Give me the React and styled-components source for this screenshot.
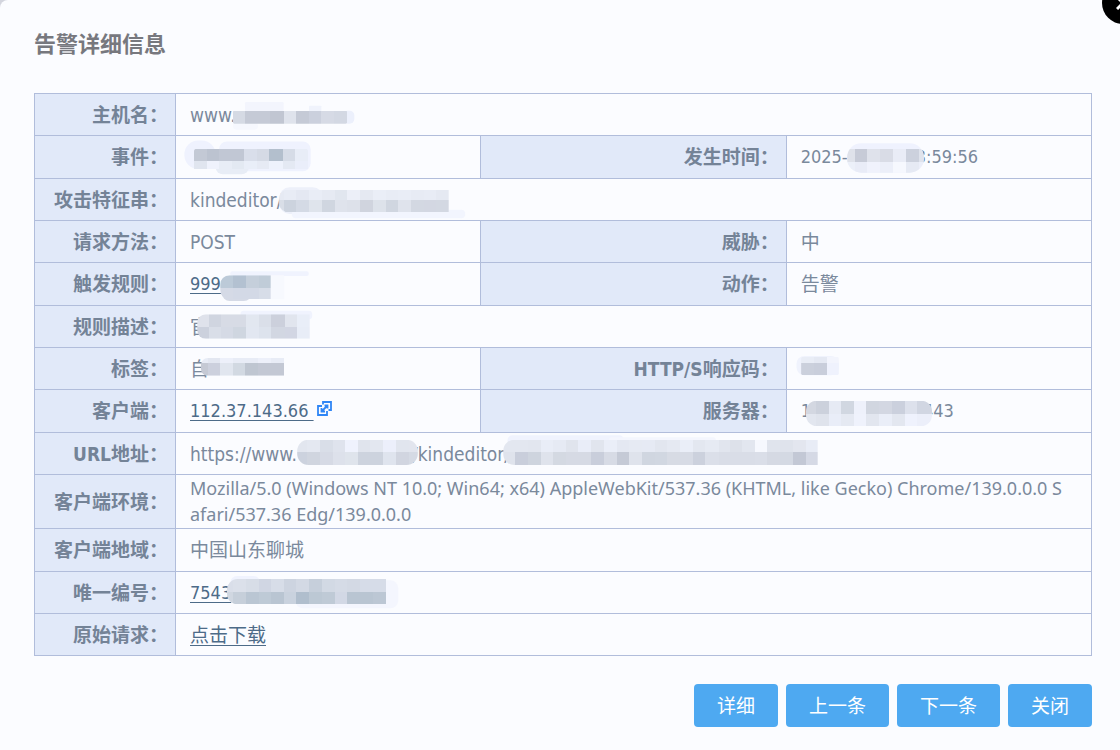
import React, { useId } from 'react';
import styled, { createGlobalStyle } from 'styled-components';

const GlobalStyle = createGlobalStyle`
  * {
    box-sizing: border-box;
  }

  body {
    margin: 0;
    background: #d3d5de;
    color: #7a899c;
    font-family: Tahoma, 'DejaVu Sans Condensed', 'Noto Sans CJK SC', sans-serif;
    font-size: 19px;
    line-height: 26px;
  }
`;

const Dialog = styled.main`
  position: relative;
  min-height: 100vh;
  padding: 32px 28px 22px 34px;
  overflow: hidden;
  background: #fbfcff;
  border-top-left-radius: 8px;
`;

const Title = styled.h1`
  margin: 0 0 35px;
  color: #77787e;
  font-size: 22px;
  line-height: 26px;
`;

const CloseButton = styled.button`
  position: absolute;
  top: -18px;
  right: -24px;
  width: 42px;
  height: 42px;
  padding: 0;
  border: 0;
  border-radius: 50%;
  background: #000;
  cursor: pointer;

  svg {
    display: block;
    margin: auto;
  }
`;

const DetailTable = styled.table`
  width: 100%;
  table-layout: fixed;
  border-collapse: collapse;
`;

const LabelCol = styled.col`
  width: 141px;
`;

const Row = styled.tr`
  height: 42px;

  &:nth-child(3n + 2) {
    height: 43px;
  }
`;

const Label = styled.th`
  padding: 0 7px 0 0;
  border: 1px solid #b1bddb;
  background: #e1e9f9;
  color: #748397;
  font-weight: bold;
  text-align: right;
  white-space: nowrap;
`;

const Value = styled.td`
  padding: 0 14px;
  border: 1px solid #b1bddb;
`;

const Line = styled.div`
  display: flex;
  align-items: center;
  font-size: ${props => (props.$numeric ? 18 : 19)}px;
  white-space: pre;
`;

const LongText = styled.div`
  padding: 0 8px 1px 0;
  font-family: 'Noto Sans', sans-serif;
  font-size: 18px;
  word-break: break-all;
`;

const Link = styled.a`
  color: #4d6b88;
  text-decoration: underline;
  text-decoration-thickness: 1px;
  text-underline-offset: 3px;
`;

const IconLink = styled.a`
  display: flex;
  margin: 0 0 6px 3px;
`;

const MosaicSvg = styled.svg`
  position: relative;
  flex: none;
  overflow: visible;
  margin-left: -${props => props.$before || 0}px;
  margin-right: -${props => props.$after || 0}px;
`;

const Actions = styled.footer`
  display: flex;
  justify-content: flex-end;
  gap: 8px;
  margin-top: 28px;
`;

const ActionButton = styled.button`
  height: 43px;
  padding: 0 23px;
  border: 0;
  border-radius: 4px;
  background: #4ea9f1;
  color: #fff;
  font: inherit;
  cursor: pointer;
`;

// Masks are drawn on a grid of three units per pixel, measured from the row's top line.
const masks = {
  host: {
    xs: [0, 36, 75, 112, 152, 188, 228, 265, 304, 342],
    halo: [[36, 24, 116, 28, 4, '#f3f5fd'], [0, 86, 75, 21, 10, '#f6f8fe'], [228, 35, 37, 20, 2, '#f0f3fc'], [330, 50, 34, 39, 14, '#ecf0fc']],
    clip: [0, 50, 342, 39, 4],
    bands: [[50, 39, 'd5dae4 c5cad6 c5cad6 c1c6d2 dfe3ec c5cad6 cbd0dd d6dae5 d3d8e3']],
  },
  event: {
    xs: [0, 39, 75, 114, 151, 190, 227, 267, 303, 343],
    halo: [[-29, 13, 94, 86, 42, '#eff2fe'], [75, 16, 276, 90, 24, '#eff2fe'], [65, 70, 100, 45, 22, '#e8edf6']],
    clip: [0, 38, 343, 70, 8],
    bands: [[38, 37, 'c3c9d5 bcc3d0 c1c7d4 c1c7d4 d9deea d5dae5 b3bfcd d6dce7 e8edf7'], [75, 25, 'e0e5ef eff2fc e8edf6 e3e9f2 e9eef8 e6eaf4 eef2fc e4e9f3 eaeefa']],
  },
  time: {
    xs: [198, 222, 258, 297, 334, 375, 413, 428],
    halo: [[198, 22, 230, 88, 42, '#eff2fe']],
    clip: [198, 22, 230, 88, 42],
    bands: [[39, 38, 'dfe2ea c7cbd7 dfe2eb d9dce6 e9ecf6 ccd1dd dfe3ec'], [77, 33, 'ecf0f9 e9ecf7 f0f2fc eceff9 f6f8fe e6eaf4 eceffa']],
  },
  feature: {
    xs: [297, 312, 348, 387, 426, 465, 501, 540, 577, 616, 654, 693, 730, 768, 806],
    halo: [[298, 25, 130, 80, 30, '#edf0fa'], [335, 92, 520, 26, 12, '#f2f5fe']],
    clip: [297, 30, 509, 70, 28],
    square: true,
    bands: [[32, 30, 'e6eaf3 e8ecf5 e4e8f2 e9edf6 e6eaf3 e1e6ef eceff8 e5e9f2 eaeef7 e8ecf5 e9edf6 e7ebf4 e8ecf5 e5e9f2'], [62, 38, 'd9dee7 ccd3de d4dae5 dfe4ec d0d6e0 dfe3ec dde1ea d0d4de dde2ea d0d6e0 dfe3ec d3d8e2 d3d7e2 d3d8e2']],
  },
  rule: {
    xs: [120, 158, 196, 235, 272],
    halo: [[150, 25, 236, 14, 7, '#f0f3fe'], [260, 37, 52, 72, 2, '#f7f9fe'], [125, 60, 90, 54, 24, '#d5dae6']],
    clip: [120, 37, 152, 72, 28],
    square: true,
    bands: [[37, 38, 'bccad8 b3c1d1 c5cfdb c0ccd8'], [75, 34, 'd5dae6 d3d9e6 d3d9e6 d7dde8']],
  },
  description: {
    xs: [50, 84, 120, 158, 196, 235, 272, 312, 348, 388],
    halo: [[180, 14, 215, 26, 10, '#f0f3fe']],
    clip: [50, 25, 338, 73, 26],
    square: true,
    bands: [[25, 39, 'dfe2eb d0d5e0 d7dbe5 d7dbe5 e2e7f0 dadfe9 ccd0dc e1e5ee e9eef8'], [64, 34, 'ccd1dd d9dee8 d5dae5 cfd6e0 e2e7f1 dde3ed d2d7e2 d2d6e3 e8edf7']],
  },
  tag: {
    xs: [62, 84, 120, 158, 196, 235, 272, 312],
    halo: [[75, 30, 237, 30, 14, '#eff2fb']],
    clip: [62, 30, 250, 53, 20],
    square: true,
    bands: [[30, 16, 'e8ecf6 e3e7f1 edf0fa e8ecf6 e8ecf6 edf0fa e8ecf6'], [46, 37, 'c5c9d4 ccd0dd e1e6ef d2d9e2 bfc6d1 c3c8d4 c3c8d4']],
  },
  status: {
    xs: [549, 587, 626, 662],
    halo: [[535, 24, 127, 58, 24, '#f0f3fd']],
    clip: [549, 26, 113, 56, 6],
    bands: [[28, 18, 'e9edf6 e5e9f3 f3f5fd'], [46, 36, 'cbd0dc c9cedb eff2fd']],
  },
  server: {
    xs: [558, 587, 626, 662, 702, 738, 778, 815, 855, 890, 936],
    halo: [],
    clip: [558, 32, 378, 76, 32],
    bands: [[32, 39, 'd3d7e1 ccd1dc e6eaf4 d1d7e1 eef1fb d1d6e0 d3d7e2 cbd0dd dde1ec d1d6e2'], [71, 37, 'e2e6ef dfe3ec e9edf8 e5e9f2 eff2fc e2e6ef eaeef8 e3e7f0 eff2fd eceffa']],
  },
  domain: {
    xs: [358, 387, 426, 465, 501, 540, 577, 616, 654, 693, 720],
    halo: [],
    clip: [358, 20, 362, 76, 34],
    bands: [[20, 38, 'e2e6ef e4e8f1 d9dee8 dfe3ed eff2fd e0e4ed e3e7f0 eceffb e1e5ee e2e5ee'], [58, 38, 'ccd2de d0d5df d6dae5 dde1eb dfe4ec cdd3de cdd3de dfe4ee d1d5e0 d5dae4']],
  },
  path: {
    xs: [32, 68, 106, 144, 180, 219, 257, 295, 333, 372, 408, 448, 486, 524, 561, 600, 637, 678, 712, 748, 786, 824, 863, 900, 940, 976],
    halo: [[45, 7, 350, 30, 15, '#f0f3fe'], [350, 13, 320, 20, 8, '#f4f6fe']],
    clip: [32, 20, 944, 76, 34],
    square: true,
    bands: [
      [20, 37, 'e3e7f0 e3e7f0 e2e6ef e9edf7 e6eaf4 e0e4ed e9edf8 e1e5ee eaeef8 e4e8f2 e6eaf3 e6eaf4 e2e6ef e5e9f2 eaeef8 e3e7f0 e6eaf3 e1e5ee dde1ea e2e6ef f6f8fe e0e4ed dfe3ec e3e6ef e8ecf6'],
      [57, 39, 'dfe3ec c9cedb ced4de dfe3ec d4d9e2 d6dae4 d6dae4 c9cedb d7dbe5 c5cad6 dfe3ec d0d6e0 d1d7e1 d7dbe4 d7dbe5 ccd1dd dbdfe9 d9dde7 d9dde7 d9dde7 dadee8 d5d9e3 d4d9e3 c3c8d5 d5d9e5'],
    ],
  },
  serial: {
    xs: [140, 158, 196, 235, 272, 312, 348, 387, 426, 465, 501, 540, 580, 618],
    halo: [[150, 12, 90, 50, 20, '#f0f3fe'], [345, 25, 310, 84, 24, '#f4f6fe']],
    clip: [140, 21, 478, 76, 32],
    square: true,
    bands: [[21, 39, 'd9dee9 dbe0ea d7dde7 d0d6e3 d7dde8 cdd4e0 d3d9e4 c6cfdb d2d9e4 d5dbe6 d3d9e4 d6dce8 d6dce8'], [60, 37, 'd0d7e1 c6cfda bac6d3 becad6 b9c5d2 c9d2de b0becd bcc8d4 bfcad6 d2d8e5 b9c5d2 b9c5d2 bcc7d4']],
  },
};

const Mosaic = ({ name, before, after }) => {
  const id = useId();
  const { xs, halo, clip, bands, square } = masks[name];
  const left = xs[0];
  const span = xs[xs.length - 1] - left;
  const [cx, cy, cw, ch, r] = clip;

  return (
    <MosaicSvg
      $before={before}
      $after={after}
      width={Math.round(span / 3)}
      height={40}
      viewBox={`${left} 3 ${span} 120`}
      aria-hidden="true"
    >
      <clipPath id={id}>
        <rect x={cx} y={cy} width={cw} height={ch} rx={r} />
        {square && <rect x={cx + cw / 2} y={cy} width={cw / 2} height={ch} />}
      </clipPath>
      {halo.map(([x, y, w, h, radius, fill]) => (
        <rect key={`${x}-${y}`} x={x} y={y} width={w} height={h} rx={radius} fill={fill} />
      ))}
      <g clipPath={`url(#${id})`} shapeRendering="crispEdges">
        {bands.map(([y, h, colors]) =>
          colors.split(' ').map((color, i) => (
            <rect key={`${y}-${i}`} x={xs[i]} y={y} width={xs[i + 1] - xs[i]} height={h} fill={`#${color}`} />
          ))
        )}
      </g>
    </MosaicSvg>
  );
};

const OpenIcon = () => (
  <svg width="15" height="15" viewBox="0 0 15 15" fill="none" stroke="#2f86f6" strokeWidth="1.8">
    <path d="M5 5H1v9h9v-4" />
    <path d="M6 3.5V1h8v8h-2.5" />
    <path d="M10.5 4.5L4.5 10.5M4.5 7v3.5H8M7.5 4.5h3v3" />
  </svg>
);

const rows = [
  [{ label: '主机名：', value: <>www.<Mosaic name="host" before={3} /></> }],
  [
    { label: '事件：', value: <>&nbsp;<Mosaic name="event" before={1} /></> },
    { label: '发生时间：', value: <>2025-<Mosaic name="time" before={1} after={8} />3:59:56</>, numeric: true },
  ],
  [{ label: '攻击特征串：', value: <>kindeditor/<Mosaic name="feature" before={3} /></> }],
  [
    { label: '请求方法：', value: 'POST' },
    { label: '威胁：', value: '中' },
  ],
  [
    { label: '触发规则：', value: <><Link href="#rule">999</Link><Mosaic name="rule" before={1} /></>, numeric: true },
    { label: '动作：', value: '告警' },
  ],
  [{ label: '规则描述：', value: <>官<Mosaic name="description" before={12} /></> }],
  [
    { label: '标签：', value: <>自<Mosaic name="tag" before={8} /></> },
    { label: 'HTTP/S响应码：', value: <Mosaic name="status" /> },
  ],
  [
    {
      label: '客户端：',
      value: (
        <>
          <Link href="#client">112.37.143.66 </Link>
          <IconLink href="#open" aria-label="打开"><OpenIcon /></IconLink>
        </>
      ),
      numeric: true,
    },
    { label: '服务器：', value: <>1<Mosaic name="server" before={5} after={9} />443</>, numeric: true },
  ],
  [
    {
      label: 'URL地址：',
      value: (
        <>
          https://www.<Mosaic name="domain" after={6} />/kindeditor/<Mosaic name="path" before={7} />
        </>
      ),
    },
  ],
  [
    {
      label: '客户端环境：',
      value:
        'Mozilla/5.0 (Windows NT 10.0; Win64; x64) AppleWebKit/537.36 (KHTML, like Gecko) Chrome/139.0.0.0 Safari/537.36 Edg/139.0.0.0',
      long: true,
    },
  ],
  [{ label: '客户端地域：', value: '中国山东聊城' }],
  [{ label: '唯一编号：', value: <><Link href="#serial">7543</Link><Mosaic name="serial" before={4} /></>, numeric: true }],
  [{ label: '原始请求：', value: <Link href="#download">点击下载</Link> }],
];

const App = () => (
  <>
    <GlobalStyle />
    <Dialog>
      <Title>告警详细信息</Title>
      <CloseButton aria-label="关闭窗口">
        <svg width="14" height="14" viewBox="0 0 14 14" stroke="#fff" strokeWidth="3">
          <path d="M1 1l12 12M13 1L1 13" />
        </svg>
      </CloseButton>

      <DetailTable>
        <colgroup>
          <LabelCol />
          <col />
          <col />
          <col />
        </colgroup>
        <tbody>
          {rows.map(cells => (
            <Row key={cells[0].label}>
              {cells.map(({ label, value, numeric, long }) => (
                <React.Fragment key={label}>
                  <Label scope="row">{label}</Label>
                  <Value colSpan={cells.length === 1 ? 3 : 1}>
                    {long ? <LongText>{value}</LongText> : <Line $numeric={numeric}>{value}</Line>}
                  </Value>
                </React.Fragment>
              ))}
            </Row>
          ))}
        </tbody>
      </DetailTable>

      <Actions>
        <ActionButton type="button">详细</ActionButton>
        <ActionButton type="button">上一条</ActionButton>
        <ActionButton type="button">下一条</ActionButton>
        <ActionButton type="button">关闭</ActionButton>
      </Actions>
    </Dialog>
  </>
);

export default App;
